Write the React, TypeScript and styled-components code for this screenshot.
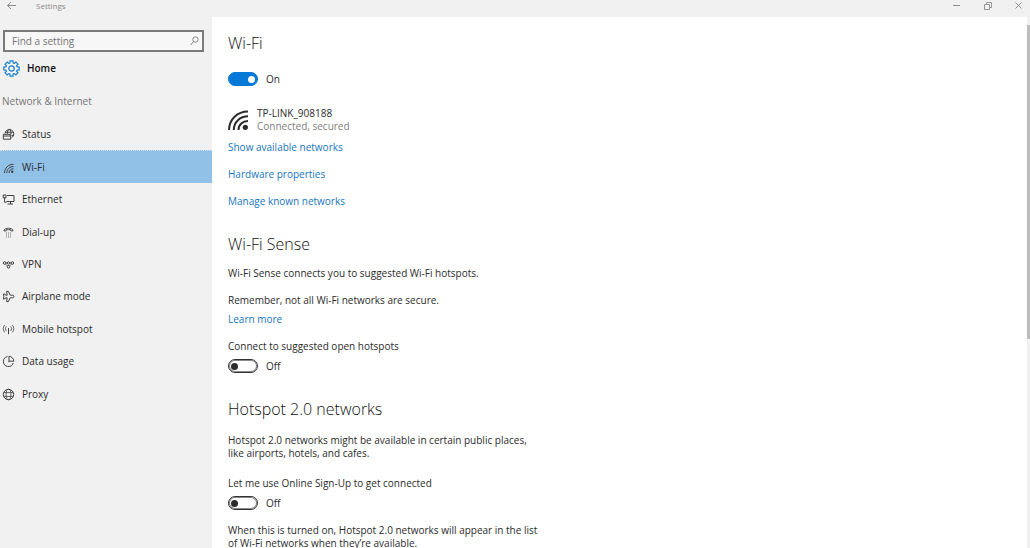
import React, { useState } from "react";
import styled, { createGlobalStyle } from "styled-components";

const Global = createGlobalStyle`
  * { box-sizing: border-box; }
  body {
    margin: 0;
    background: #fff;
    color: #2b2b2b;
    font-family: "Open Sans", "Noto Sans", sans-serif;
    font-size: 10px;
    line-height: 13px;
  }
  h1, h2, p, ul { margin: 0; padding: 0; }
  button { padding: 0; border: 0; background: none; font: inherit; color: inherit; }
  svg { display: block; fill: none; stroke: currentColor; flex: none; }
`;

const Window = styled.div`
  display: flex;
  flex-direction: column;
  height: 100vh;
  overflow: hidden;
`;

const TitleBar = styled.header`
  display: flex;
  align-items: center;
  flex: none;
  height: 17px;
  padding: 0 6px;
  background: #f1f1f1;
  color: #8c8c8c;
  font-size: 8px;
  line-height: 12px;
`;

const TitleText = styled.span`
  flex: 1;
  padding: 0 0 5px 19px;
`;

const TitleButton = styled.button`
  display: flex;
  align-items: center;
  height: 12px;
  margin-bottom: 6px;
`;

const WindowButtons = styled.div`
  display: flex;
  gap: 20px;
`;

const Body = styled.div`
  display: flex;
  flex: 1;
  min-height: 0;
`;

const Sidebar = styled.aside`
  flex: none;
  width: 212px;
  padding-top: 13px;
  background: #f1f1f1;
`;

const SearchBox = styled.label`
  display: flex;
  align-items: center;
  height: 22px;
  margin: 0 8px 0 3px;
  padding: 0 3px 0 7px;
  border: 2px solid #7a7a7a;
  background: #f7f7f7;
  color: #858585;
`;

const SearchInput = styled.input`
  flex: 1;
  min-width: 0;
  padding: 0;
  border: 0;
  outline: 0;
  background: transparent;
  font: inherit;
  color: #333;
  &::placeholder { color: #757575; opacity: 1; }
`;

const HomeLink = styled.a`
  display: flex;
  align-items: center;
  gap: 7px;
  height: 32px;
  padding-left: 3px;
  color: #111;
  font-weight: 600;
  text-decoration: none;
  svg { color: #1a7fd0; }
`;

const GroupTitle = styled.h2`
  height: 34px;
  padding: 11px 0 0 2px;
  color: #767676;
  font-size: 10px;
  font-weight: 400;
  line-height: 13px;
`;

const NavList = styled.ul`
  display: grid;
  grid-template-rows: repeat(9, 1fr);
  height: 292px;
  list-style: none;
`;

const NavItem = styled.a<{ $active: boolean }>`
  display: flex;
  align-items: center;
  gap: 7px;
  height: 100%;
  padding-left: 2px;
  border-top: 1px ${(p) => (p.$active ? "dotted #cfe2f0" : "solid transparent")};
  background: ${(p) => (p.$active ? "#91c1e7" : "transparent")};
  color: inherit;
  text-decoration: none;
  svg { color: #404040; }
`;

const Content = styled.main`
  flex: 1;
  min-width: 0;
  overflow: hidden;
  padding: 15px 16px 0;
`;

const Heading = styled.h1`
  color: #111;
  font-size: 16px;
  font-weight: 300;
  line-height: 22px;
`;

const Section = styled.section`
  padding-top: 25px;
`;

const Para = styled.p<{ $top: number }>`
  max-width: 310px;
  margin-top: ${(p) => p.$top}px;
`;

const Link = styled.a`
  color: #1676c2;
  text-decoration: none;
`;

const LinkStack = styled.div`
  display: flex;
  flex-direction: column;
  align-items: flex-start;
  gap: 14px;
  margin-top: 8px;
`;

const Network = styled.div`
  display: flex;
  align-items: center;
  gap: 8px;
  margin-top: 21px;
`;

const NetworkState = styled.div`
  color: #808080;
`;

const SwitchLabel = styled.label<{ $top: number }>`
  display: grid;
  grid-template-columns: auto 1fr;
  column-gap: 8px;
  row-gap: 6px;
  align-items: center;
  margin-top: ${(p) => p.$top}px;
`;

const SwitchCaption = styled.span`
  grid-column: 1 / -1;
`;

const SwitchInput = styled.input`
  appearance: none;
  display: flex;
  align-items: center;
  width: 30px;
  height: 14px;
  margin: 0;
  padding: 0 2px;
  border: 1px solid #333;
  border-radius: 7px;
  box-shadow: inset 0 0 0 1px #8a8a8a;
  background: #fff;
  &::before {
    content: "";
    width: 7px;
    height: 7px;
    border-radius: 50%;
    background: #2b2b2b;
  }
  &:checked {
    justify-content: flex-end;
    border-color: #0678d7;
    box-shadow: none;
    background: #0678d7;
  }
  &:checked::before { background: #fff; }
`;

const Scrollbar = styled.div`
  display: flex;
  flex-direction: column;
  flex: none;
  width: 3px;
  padding-top: 8px;
  background: #f1f1f1;
`;

const Thumb = styled.div`
  height: 60%;
  background: #bdbdbd;
`;

const Icon = ({ children }: { children: React.ReactNode }) => (
  <svg width="13" height="13" viewBox="0 0 13 13" strokeWidth="1" aria-hidden="true">{children}</svg>
);

const gearPath = Array.from({ length: 8 }, (_, i) => {
  const at = (deg: number, r: number) => {
    const a = ((i * 45 + deg) * Math.PI) / 180;
    return `${(8.5 + r * Math.cos(a)).toFixed(2)} ${(8.5 + r * Math.sin(a)).toFixed(2)}`;
  };
  return `${i ? "L" : "M"}${at(-15, 6)}L${at(-11, 7.8)}L${at(11, 7.8)}L${at(15, 6)}Q${at(22.5, 5.2)} ${at(30, 6)}`;
}).join("") + "Z";

const WifiShape = () => (
  <>
    <path d="M1 19C1 9 9 1.5 19 1.5M5.5 19C5.5 11.5 11.5 6 19 6M10 19C10 14 14 10.5 19 10.5" />
    <circle cx="16.5" cy="16.5" r="2.5" fill="currentColor" stroke="none" />
  </>
);

const navItems: { name: string; icon: React.ReactNode }[] = [
  {
    name: "Status",
    icon: (
      <Icon>
        <path d="M3 5.5A4.4 4.4 0 1 1 9.8 9.6M3.3 4.2H11M5.4 5.8C5.4 3.2 6 1.6 7.2 1C8.6 2 9.2 4 9 6.2M9.6 7.4H11.4" />
        <path d="M1.3 6.3H8.7V11.2H1.3ZM1.3 8H8.7" />
      </Icon>
    ),
  },
  {
    name: "Wi-Fi",
    icon: (
      <svg width="13" height="13" viewBox="-4 -5 26 26" strokeWidth="2" aria-hidden="true"><WifiShape /></svg>
    ),
  },
  {
    name: "Ethernet",
    icon: <Icon><path d="M5 2.5H12V8.5H4.5M8.5 8.5V11M5.5 11H11M1.2 2H4V4.8H1.2ZM2.6 4.8V9.2H4.5" /></Icon>,
  },
  {
    name: "Dial-up",
    icon: (
      <Icon>
        <path d="M2 4.9C1.2 1.4 11.8 1.4 11 4.9H8.8V3.7H4.2V4.9Z" strokeWidth=".9" />
        <path d="M4.5 6.5V11.5M6.5 6.5V11.5M8.5 6.5V11.5" strokeDasharray="1 1" stroke="#777" />
      </Icon>
    ),
  },
  {
    name: "VPN",
    icon: (
      <Icon>
        <circle cx="2.6" cy="5" r="1.3" />
        <circle cx="6.5" cy="5" r="1.2" />
        <circle cx="10.4" cy="5" r="1.3" />
        <circle cx="6.5" cy="8.8" r="1.3" />
        <path d="M3.5 6.1L5.4 8M9.5 6.1L7.6 8M3.9 5H5.2M7.8 5H9.1" strokeWidth=".8" />
      </Icon>
    ),
  },
  {
    name: "Airplane mode",
    icon: <Icon><path d="M4.6 1.4H6.4L8.2 5.2H10.8C12.3 5.4 12.3 7.6 10.8 7.8H8.2L6.4 11.6H4.6L5.2 7.8H3.6L2.8 9H1.4L1.9 6.5L1.4 4H2.8L3.6 5.2H5.2Z" /></Icon>,
  },
  {
    name: "Mobile hotspot",
    icon: (
      <Icon>
        <path d="M2.7 2C.8 4 .8 7.4 2.7 9.4M4.3 3.4C3.2 4.8 3.2 6.6 4.3 8M10.3 2C12.2 4 12.2 7.4 10.3 9.4M8.7 3.4C9.8 4.8 9.8 6.6 8.7 8" strokeWidth=".8" />
        <path d="M6.5 5V11.2" />
      </Icon>
    ),
  },
  {
    name: "Data usage",
    icon: <Icon><path d="M5.5 1.6A5 5 0 1 0 11.2 8M7 1.3V6.2H11.8A5 5 0 0 0 7 1.3ZM6.3 6.8L7 6.2" /></Icon>,
  },
  {
    name: "Proxy",
    icon: (
      <Icon>
        <circle cx="6.5" cy="6.5" r="5.2" />
        <ellipse cx="6.5" cy="6.5" rx="2.4" ry="5.2" strokeWidth=".8" />
        <path d="M1.8 4.6H11.2M1.8 8.4H11.2" strokeWidth=".8" />
      </Icon>
    ),
  },
];

type SwitchProps = { caption?: string; name: string; top: number; initial?: boolean };
function Switch({ caption, name, top, initial = false }: SwitchProps) {
  const [on, setOn] = useState(initial);
  return (
    <SwitchLabel $top={top}>
      {caption && <SwitchCaption>{caption}</SwitchCaption>}
      <SwitchInput type="checkbox" role="switch" name={name} checked={on} onChange={() => setOn(!on)} />
      <span>{on ? "On" : "Off"}</span>
    </SwitchLabel>
  );
}

export default function App() {
  return (
    <Window>
      <Global />
      <TitleBar>
        <TitleButton aria-label="Back">
          <svg width="11" height="9" viewBox="0 0 11 9"><path d="M10 4.5H1.5M5 1L1.5 4.5L5 8" /></svg>
        </TitleButton>
        <TitleText>Settings</TitleText>
        <WindowButtons>
          <TitleButton aria-label="Minimize">
            <svg width="11" height="9" viewBox="0 0 11 9"><path d="M2 4.5H9" /></svg>
          </TitleButton>
          <TitleButton aria-label="Restore">
            <svg width="11" height="9" viewBox="0 0 11 9"><path d="M2.5 3.5H7.5V8.5H2.5ZM4.5 3V1.5H9.5V6.5H8" strokeWidth=".9" /></svg>
          </TitleButton>
          <TitleButton aria-label="Close">
            <svg width="11" height="9" viewBox="0 0 11 9"><path d="M2.5 1.5L8.5 7.5M8.5 1.5L2.5 7.5" /></svg>
          </TitleButton>
        </WindowButtons>
      </TitleBar>
      <Body>
        <Sidebar>
          <SearchBox>
            <SearchInput type="search" aria-label="Find a setting" placeholder="Find a setting" />
            <svg width="9" height="10" viewBox="0 0 9 10" aria-hidden="true"><circle cx="5.5" cy="3.5" r="2.7" /><path d="M3.6 5.5L.5 9" /></svg>
          </SearchBox>
          <HomeLink href="#home">
            <svg width="17" height="17" viewBox="0 0 17 17" strokeWidth="1.2" aria-hidden="true"><path d={gearPath} /><circle cx="8.5" cy="8.5" r="2.7" /></svg>
            Home
          </HomeLink>
          <GroupTitle>Network &amp; Internet</GroupTitle>
          <nav aria-label="Network &amp; Internet">
            <NavList>
              {navItems.map((item) => (
                <li key={item.name}>
                  <NavItem href={`#${item.name}`} $active={item.name === "Wi-Fi"}>
                    {item.icon}
                    {item.name}
                  </NavItem>
                </li>
              ))}
            </NavList>
          </nav>
        </Sidebar>
        <Content>
          <Heading>Wi-Fi</Heading>
          <Switch name="wifi" top={18} initial />
          <Network>
            <svg width="21" height="21" viewBox="0 0 20 20" strokeWidth="1.9" aria-hidden="true"><WifiShape /></svg>
            <div>
              <div>TP-LINK_908188</div>
              <NetworkState>Connected, secured</NetworkState>
            </div>
          </Network>
          <LinkStack>
            <Link href="#available">Show available networks</Link>
            <Link href="#hardware">Hardware properties</Link>
            <Link href="#known">Manage known networks</Link>
          </LinkStack>
          <Section>
            <Heading as="h2">Wi-Fi Sense</Heading>
            <Para $top={12}>Wi-Fi Sense connects you to suggested Wi-Fi hotspots.</Para>
            <Para $top={14}>Remember, not all Wi-Fi networks are secure.</Para>
            <Para $top={6}><Link href="#learn">Learn more</Link></Para>
            <Switch name="suggested" top={14} caption="Connect to suggested open hotspots" />
          </Section>
          <Section>
            <Heading as="h2">Hotspot 2.0 networks</Heading>
            <Para $top={14}>Hotspot 2.0 networks might be available in certain public places, like airports, hotels, and cafes.</Para>
            <Switch name="signup" top={17} caption="Let me use Online Sign-Up to get connected" />
            <Para $top={14}>When this is turned on, Hotspot 2.0 networks will appear in the list of Wi-Fi networks when they’re available.</Para>
          </Section>
        </Content>
        <Scrollbar aria-hidden="true"><Thumb /></Scrollbar>
      </Body>
    </Window>
  );
}
